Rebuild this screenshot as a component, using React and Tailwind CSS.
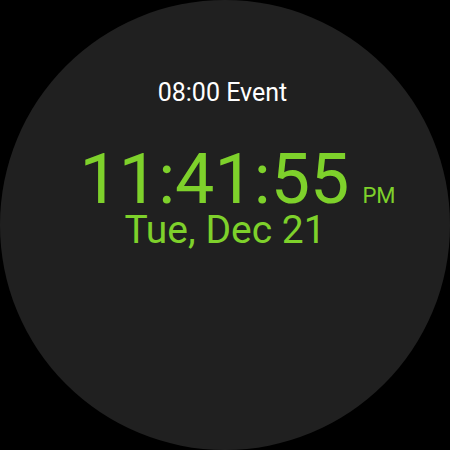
import React from 'react';

const App = () => {
  return (
    <div className="w-[450px] h-[450px] bg-black" style={{ fontFamily: 'Roboto, sans-serif' }}>
      <div className="w-[450px] h-[450px] rounded-full bg-[#202020] flex flex-col items-center pt-[80px]">
        <div className="text-white text-[25px] leading-none mr-[5px]">08:00 Event</div>
        <div className="flex items-baseline gap-[13px] mt-[44px] ml-[25px] text-[#7ed12b]">
          <span className="text-[70px] leading-[60px]">11:41:55</span>
          <span className="text-[22px] leading-none">PM</span>
        </div>
        <div className="text-[#7ed12b] text-[39px] leading-none mt-[2px]">Tue, Dec 21</div>
      </div>
    </div>
  );
};

export default App;
